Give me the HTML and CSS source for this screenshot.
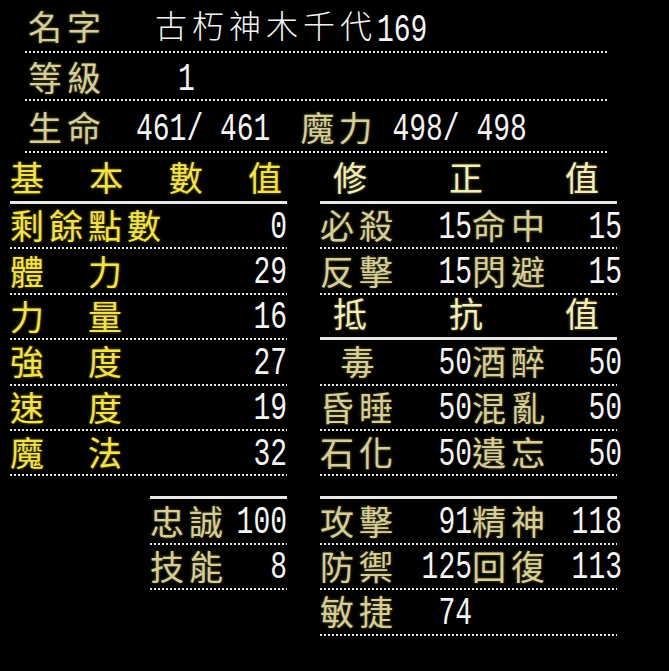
FILE: index.html
```html
<!DOCTYPE html>
<html lang="zh-Hant">
<head>
<meta charset="utf-8">
<title>狀態</title>
<link rel="stylesheet" href="styles.css">
</head>
<body>
<div class="sheet">
  <div class="top">
    <div class="trow r1"><span class="lab kh w127">名字</span><span class="val">古朽神木千代<span class="num">169</span></span></div>
    <div class="trow r2"><span class="lab kh w127">等級</span><span class="num lv">1</span></div>
    <div class="trow r3"><span class="lab kh w108">生命</span><span class="num">461/ 461</span><span class="lab kh mp">魔力</span><span class="num">498/ 498</span></div>
  </div>

  <div class="main">
    <div class="lpanel">
      <div class="hrow"><span class="lab yh">基</span><span class="lab yh">本</span><span class="lab yh">數</span><span class="lab yh">值</span></div>
      <div class="row lrow"><span class="lab yl">剩餘點數</span><span class="num">0</span></div>
      <div class="row lrow"><span class="lab yl">體　力</span><span class="num">29</span></div>
      <div class="row lrow"><span class="lab yl">力　量</span><span class="num">16</span></div>
      <div class="row lrow"><span class="lab yl">強　度</span><span class="num">27</span></div>
      <div class="row lrow"><span class="lab yl">速　度</span><span class="num">19</span></div>
      <div class="row lrow"><span class="lab yl">魔　法</span><span class="num">32</span></div>
    </div>
    <div class="rpanel">
      <div class="hrow rhead"><span class="lab hd">修</span><span class="lab hd">正</span><span class="lab hd">值</span></div>
      <div class="row grid4"><span class="lab kh">必殺</span><span class="num">15</span><span class="lab kh">命中</span><span class="num">15</span></div>
      <div class="row grid4"><span class="lab kh">反擊</span><span class="num">15</span><span class="lab kh">閃避</span><span class="num">15</span></div>
      <div class="hrow rhead mid"><span class="lab hd">抵</span><span class="lab hd">抗</span><span class="lab hd">值</span></div>
      <div class="row grid4"><span class="lab kh ctr">毒</span><span class="num">50</span><span class="lab kh">酒醉</span><span class="num">50</span></div>
      <div class="row grid4"><span class="lab kh">昏睡</span><span class="num">50</span><span class="lab kh">混亂</span><span class="num">50</span></div>
      <div class="row grid4"><span class="lab kh">石化</span><span class="num">50</span><span class="lab kh">遺忘</span><span class="num">50</span></div>
    </div>
  </div>

  <div class="bottom">
    <div class="bl">
      <div class="bline"></div>
      <div class="row grid2"><span class="lab kh">忠誠</span><span class="num">100</span></div>
      <div class="row grid2"><span class="lab kh">技能</span><span class="num">8</span></div>
    </div>
    <div class="br">
      <div class="bline"></div>
      <div class="row grid4"><span class="lab kh">攻擊</span><span class="num">91</span><span class="lab kh">精神</span><span class="num">118</span></div>
      <div class="row grid4"><span class="lab kh">防禦</span><span class="num">125</span><span class="lab kh">回復</span><span class="num">113</span></div>
      <div class="row grid4"><span class="lab kh">敏捷</span><span class="num">74</span></div>
    </div>
  </div>
</div>
</body>
</html>
```

FILE: styles.css
```css
html, body {
  margin: 0;
  padding: 0;
  background: #000;
}

body {
  width: 669px;
  height: 671px;
  overflow: hidden;
  font-family: "Noto Sans CJK TC", "Noto Sans CJK SC", sans-serif;
  color: #f4f4f4;
}

/* ---------- shared text ---------- */
.lab {
  font-size: 34px;
  letter-spacing: 5px;
  line-height: 1;
  white-space: nowrap;
  font-weight: 400;
  margin-bottom: 5px;
}

.num {
  display: inline-block;
  font-family: "Liberation Mono", monospace;
  font-size: 28px;
  line-height: 1;
  letter-spacing: 0;
  white-space: pre;
  color: #f4f4f4;
  transform: scaleY(1.4);
}

.yl, .yh {
  color: #f2e24e;
  text-shadow: 0 0 3px #8a7810;
}

.kh {
  color: #d6ce9a;
  text-shadow: 0 0 3px #6a6030;
}

.hd {
  color: #f2eebc;
  text-shadow: 0 0 3px #7a7040;
}

.ctr {
  text-align: center;
}

/* ---------- dotted rule ---------- */
.trow, .row {
  box-sizing: border-box;
  background: linear-gradient(to right, #e6e6e6 2px, transparent 2px) left bottom / 4px 2px repeat-x;
}

/* ---------- top block ---------- */
.top {
  margin-left: 25px;
  width: 582px;
}

.trow {
  display: flex;
  align-items: center;
  padding: 5px 0 0 3px;
}

.r1 { height: 53px; padding-top: 3px; }
.r2 { height: 48px; }
.r3 { height: 52px; }

.w127 { width: 127px; }
.w108 { width: 108px; }
.mp { margin-left: 30px; width: 92px; letter-spacing: 4px; }
.top .w127, .top .w108 { letter-spacing: 5px; }
.lv { margin-left: 23px; }

.val {
  font-size: 32px;
  letter-spacing: 5px;
  line-height: 1;
  font-weight: 300;
  white-space: nowrap;
  margin-bottom: 4px;
}

/* ---------- main block ---------- */
.main {
  display: flex;
  padding-left: 10px;
  gap: 33px;
}

.lpanel { width: 277px; }
.rpanel { width: 297px; }

.hrow {
  box-sizing: border-box;
  height: 51px;
  border-bottom: 3px solid #e8e8e8;
  display: flex;
  justify-content: space-between;
  align-items: center;
  padding-top: 4px;
}

.rhead {
  padding: 4px 13px 0;
}

.rhead.mid {
  height: 45.4px;
  padding-top: 0;
}

.row {
  height: 45.4px;
  padding-top: 2px;
  display: flex;
  align-items: center;
}

.lrow {
  justify-content: space-between;
}

.grid4 {
  display: grid;
  grid-template-columns: 80px 72px 80px 70px;
  align-items: center;
}

.grid2 {
  display: grid;
  grid-template-columns: 80px 57px;
  align-items: center;
}

.grid4 .num, .grid2 .num {
  justify-self: end;
}

/* ---------- bottom block ---------- */
.bottom {
  display: flex;
  align-items: flex-start;
  padding-left: 150px;
  gap: 33px;
  margin-top: 20px;
}

.bl { width: 137px; }
.br { width: 297px; }

.bline {
  height: 3px;
  background: #e8e8e8;
}
```
